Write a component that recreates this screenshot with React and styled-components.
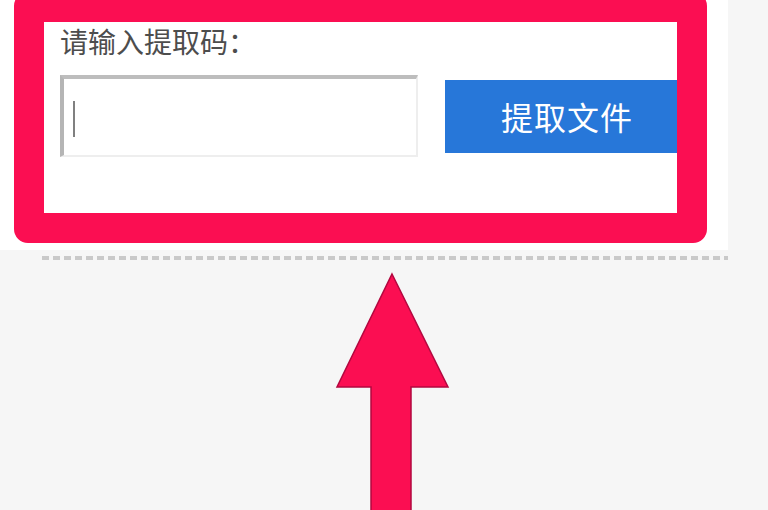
import React from "react";
import styled, { createGlobalStyle } from "styled-components";

const GlobalStyle = createGlobalStyle`
  html, body {
    margin: 0;
    padding: 0;
    background: #f6f6f6;
  }
  * {
    box-sizing: border-box;
  }
`;

const Page = styled.div`
  position: relative;
  width: 768px;
  height: 510px;
  overflow: hidden;
  background: #f6f6f6;
  font-family: "Noto Sans CJK SC", "Noto Sans", sans-serif;
`;

const Card = styled.div`
  width: 728px;
  height: 250px;
  background: #fff;
  padding: 22px 0 0 60px;
`;

const Label = styled.div`
  font-size: 28px;
  line-height: 38px;
  color: #4d4d4d;
`;

const Row = styled.div`
  display: flex;
  align-items: center;
  gap: 27px;
  margin-top: 15px;
`;

const CodeBox = styled.div`
  display: flex;
  align-items: center;
  width: 358px;
  height: 82px;
  background: #fff;
  border-style: solid;
  border-width: 4px 2px 2px 4px;
  border-color: #bdbdbd #eeeeee #eeeeee #b5b5b5;
  padding-left: 9px;
`;

const Caret = styled.span`
  display: block;
  width: 2px;
  height: 36px;
  margin-top: 4px;
  background: #808080;
`;

const Button = styled.button`
  width: 244px;
  height: 73px;
  border: none;
  background: #2777d9;
  color: #fff;
  font-family: inherit;
  font-size: 32px;
  letter-spacing: 1px;
  padding: 0;
`;

const Divider = styled.div`
  margin: 6px 0 0 42px;
  width: 686px;
  height: 4px;
  background: repeating-linear-gradient(
    to right,
    #c9c9c9 0 7px,
    transparent 7px 11px
  );
`;

const Frame = styled.div`
  position: absolute;
  left: 14px;
  top: -8px;
  width: 693px;
  height: 251px;
  border: 30px solid ${(p) => p.color};
  border-radius: 14px;
  pointer-events: none;
`;

const Arrow = styled.svg`
  position: absolute;
  left: 0;
  top: 0;
  pointer-events: none;
`;

const RED = "#fb0e52";

const App = () => {
  return (
    <Page>
      <GlobalStyle />
      <Card>
        <Label>请输入提取码：</Label>
        <Row>
          <CodeBox>
            <Caret />
          </CodeBox>
          <Button>提取文件</Button>
        </Row>
      </Card>
      <Divider />

      <Frame color={RED} />
      <Arrow width="768" height="510" viewBox="0 0 768 510">
        <polygon
          points="392,274 448,387 411,387 411,520 371,520 371,387 337,387"
          fill={RED}
          stroke="#b3073f"
          strokeWidth="1.5"
          strokeLinejoin="miter"
        />
      </Arrow>
    </Page>
  );
};

export default App;
